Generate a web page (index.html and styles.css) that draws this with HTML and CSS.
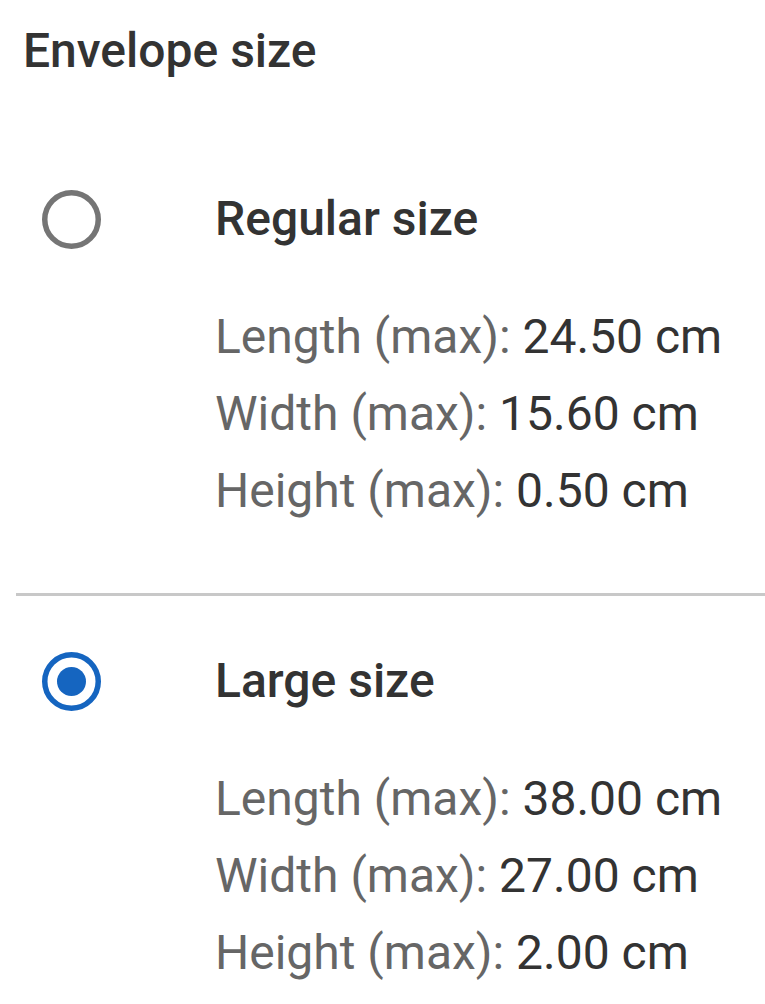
FILE: index.html
```html
<!DOCTYPE html>
<html lang="en">
<head>
    <meta charset="UTF-8">
    <meta name="viewport" content="width=device-width, initial-scale=1.0">
    <title>Envelope size</title>
    <link rel="stylesheet" href="styles.css">
</head>
<body>
    <div class="screen">
        <h1 class="section-title">Envelope size</h1>

        <div class="option">
            <div class="radio">
                <svg width="59" height="59" viewBox="0 0 59 59">
                    <circle cx="29.5" cy="29.5" r="26.75" fill="none" stroke="#757575" stroke-width="5.5"/>
                </svg>
            </div>
            <div class="option-body">
                <h2 class="option-title">Regular size</h2>
                <div class="specs">
                    <p><span class="label">Length (max):</span> <span class="value">24.50 cm</span></p>
                    <p><span class="label">Width (max):</span> <span class="value">15.60 cm</span></p>
                    <p><span class="label">Height (max):</span> <span class="value">0.50 cm</span></p>
                </div>
            </div>
        </div>

        <hr class="divider">

        <div class="option">
            <div class="radio">
                <svg width="59" height="59" viewBox="0 0 59 59">
                    <circle cx="29.5" cy="29.5" r="26.75" fill="none" stroke="#1565c0" stroke-width="5.5"/>
                    <circle cx="29.5" cy="29.5" r="14.5" fill="#1565c0"/>
                </svg>
            </div>
            <div class="option-body">
                <h2 class="option-title">Large size</h2>
                <div class="specs">
                    <p><span class="label">Length (max):</span> <span class="value">38.00 cm</span></p>
                    <p><span class="label">Width (max):</span> <span class="value">27.00 cm</span></p>
                    <p><span class="label">Height (max):</span> <span class="value">2.00 cm</span></p>
                </div>
            </div>
        </div>
    </div>
</body>
</html>
```

FILE: styles.css
```css
body {
    margin: 0;
    padding: 0;
    background: #ffffff;
    font-family: Roboto, "Noto Sans", Arial, sans-serif;
}
.screen {
    padding-top: 23px;
}
.section-title {
    margin: 0 0 112px 0;
    padding-left: 23px;
    font-size: 48px;
    line-height: 56px;
    font-weight: 500;
    color: #333333;
}
.option {
    display: flex;
    align-items: flex-start;
    padding-left: 42px;
}
.radio {
    width: 59px;
    height: 56px;
    margin-right: 114px;
    display: flex;
    align-items: center;
    flex-shrink: 0;
}
.radio svg {
    display: block;
}
.option-title {
    margin: 0 0 51px 0;
    font-size: 48px;
    line-height: 56px;
    font-weight: 500;
    color: #333333;
}
.specs p {
    margin: 0;
    font-size: 48px;
    line-height: 77px;
    white-space: nowrap;
}
.label {
    color: #666666;
}
.value {
    color: #333333;
}
.divider {
    border: none;
    height: 3px;
    background: #c8c8c8;
    margin: 64px 0 57px 16px;
}
```
